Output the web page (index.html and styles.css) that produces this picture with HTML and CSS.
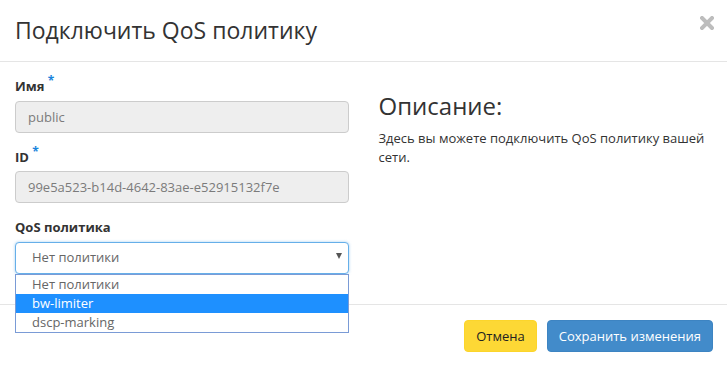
FILE: index.html
```html
<!DOCTYPE html>
<html lang="ru">
<head>
<meta charset="utf-8">
<title>Подключить QoS политику</title>
<link rel="stylesheet" href="styles.css">
</head>
<body>
<div class="modal">
  <div class="modal-header">
    <h2 class="modal-title">Подключить QoS политику</h2>
    <button class="close" type="button" aria-label="Закрыть">
      <svg width="14" height="14" viewBox="0 0 14 14"><path d="M2 2 L12 12 M12 2 L2 12" stroke="#bdbdbd" stroke-width="4" stroke-linecap="square"/></svg>
    </button>
  </div>
  <div class="modal-body">
    <div class="col">
      <div class="form-group">
        <label class="label">Имя <span class="req">*</span></label>
        <div class="input disabled">public</div>
      </div>
      <div class="form-group">
        <label class="label">ID <span class="req">*</span></label>
        <div class="input disabled">99e5a523-b14d-4642-83ae-e52915132f7e</div>
      </div>
      <div class="form-group">
        <label class="label">QoS политика</label>
        <div class="select-wrap">
          <div class="select">
            <span class="select-value">Нет политики</span>
            <span class="caret"></span>
          </div>
          <ul class="dropdown">
            <li class="option">Нет политики</li>
            <li class="option active">bw-limiter</li>
            <li class="option">dscp-marking</li>
          </ul>
        </div>
      </div>
    </div>
    <div class="col">
      <h3 class="desc-title">Описание:</h3>
      <p class="desc-text">Здесь вы можете подключить QoS политику вашей сети.</p>
    </div>
  </div>
  <div class="modal-footer">
    <button class="btn btn-cancel" type="button">Отмена</button>
    <button class="btn btn-primary" type="button">Сохранить изменения</button>
  </div>
</div>
</body>
</html>
```
FILE: styles.css
```css
* { box-sizing: border-box; }
html, body {
  margin: 0;
  padding: 0;
  background: #fff;
}
body {
  font-family: "Open Sans", "DejaVu Sans", sans-serif;
  font-size: 13px;
  line-height: 1.42857;
  color: #333;
}
.modal {
  width: 727px;
  height: 365px;
  background: #fff;
}
.modal-header {
  display: flex;
  justify-content: space-between;
  align-items: flex-start;
  padding: 15px;
  border-bottom: 1px solid #e5e5e5;
}
.modal-title {
  margin: 0;
  font-size: 23px;
  font-weight: 400;
  line-height: 31px;
  color: #333;
}
.close {
  border: 0;
  background: transparent;
  padding: 0;
  margin: 1px -2px 0 0;
  width: 14px;
  height: 14px;
  display: flex;
  cursor: pointer;
}
.modal-body {
  display: grid;
  grid-template-columns: 1fr 1fr;
  column-gap: 30px;
  padding: 15px 15px 0;
  height: 242px;
}
.form-group {
  margin-bottom: 15px;
}
.label {
  display: block;
  font-weight: 700;
  margin-bottom: 5px;
  color: #333;
}
.req {
  color: #1a84dc;
  font-size: 12px;
  position: relative;
  top: -6px;
}
.input {
  height: 32px;
  border: 1px solid #ccc;
  border-radius: 4px;
  padding: 6px 12px;
  line-height: 18px;
  color: #555;
}
.input.disabled {
  background: #eee;
  color: #7b7b7b;
}
.select-wrap {
  position: relative;
}
.select {
  height: 32px;
  display: flex;
  align-items: center;
  justify-content: space-between;
  border: 1px solid #66afe9;
  border-radius: 4px;
  padding: 0 6px 0 16px;
  color: #666;
  background: #fff;
  box-shadow: 0 0 3px rgba(102, 175, 233, 0.6);
}
.caret {
  width: 0;
  height: 0;
  border-left: 3.5px solid transparent;
  border-right: 3.5px solid transparent;
  border-top: 6px solid #555;
  margin-top: -3px;
}
.dropdown {
  position: absolute;
  left: 0;
  right: 0;
  top: 100%;
  margin: 0;
  padding: 0;
  list-style: none;
  border: 1px solid #7a9bd6;
  background: #fff;
  z-index: 2;
}
.option {
  height: 19px;
  line-height: 19px;
  padding-left: 16px;
  color: #666;
}
.option.active {
  background: #1e90ff;
  color: #fff;
}
.desc-title {
  margin: 16px 0 10px;
  font-size: 24px;
  font-weight: 400;
  line-height: 26px;
  color: #333;
}
.desc-text {
  margin: 0;
  color: #333;
}
.modal-footer {
  display: flex;
  justify-content: flex-end;
  align-items: flex-start;
  gap: 10px;
  padding: 15px 14px 15px 15px;
  border-top: 1px solid #e5e5e5;
}
.btn {
  height: 32px;
  padding: 0 11px;
  border: 1px solid transparent;
  border-radius: 4px;
  font-family: inherit;
  font-size: 13px;
  line-height: 30px;
  white-space: nowrap;
  cursor: pointer;
}
.btn-cancel {
  background: #fdd835;
  border-color: #fcd52b;
  color: #222;
}
.btn-primary {
  background: #428bca;
  border-color: #3d84c2;
  color: #fff;
}
```
